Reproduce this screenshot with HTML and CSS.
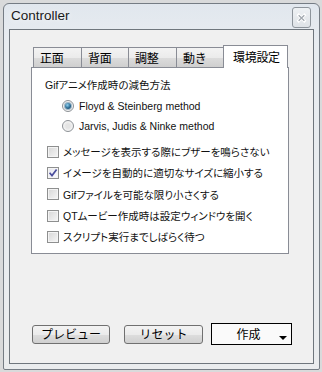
FILE: index.html
```html
<!DOCTYPE html>
<html lang="ja">
<head>
    <meta charset="UTF-8">
    <title>Controller</title>
    <link rel="stylesheet" href="styles.css">
</head>
<body>
    <div class="window">
        <div class="titlebar">
            <span class="title">Controller</span>
            <span class="close">
                <svg width="18" height="20" viewBox="0 0 18 20">
                    <path d="M6 7 L12 13 M12 7 L6 13" stroke="#ffffff" stroke-width="3.2" stroke-linecap="square"/>
                    <path d="M6 7 L12 13 M12 7 L6 13" stroke="#a3a9b0" stroke-width="1.4"/>
                </svg>
            </span>
        </div>
        <div class="client">
            <div class="tabs">
                <div class="tab" style="width: 49px">正面</div>
                <div class="tab" style="width: 48px">背面</div>
                <div class="tab" style="width: 49px">調整</div>
                <div class="tab" style="width: 48px">動き</div>
                <div class="tab selected">環境設定</div>
            </div>
            <div class="panel">
                <div class="group-label">Gifアニメ作成時の減色方法</div>
                <div class="radio-row"><span class="radio checked"></span>Floyd &amp; Steinberg method</div>
                <div class="radio-row"><span class="radio"></span>Jarvis, Judis &amp; Ninke method</div>
                <div class="checks">
                    <div class="check-row"><span class="check"></span>メッセージを表示する際にブザーを鳴らさない</div>
                    <div class="check-row"><span class="check checked">
                        <svg width="10" height="10" viewBox="0 0 10 10"><path d="M1.6 4.8 L4 7.6 L8.6 1.6" fill="none" stroke="#4a4d9c" stroke-width="1.7"/></svg>
                    </span>イメージを自動的に適切なサイズに縮小する</div>
                    <div class="check-row"><span class="check"></span>Gifファイルを可能な限り小さくする</div>
                    <div class="check-row"><span class="check"></span>QTムービー作成時は設定ウィンドウを開く</div>
                    <div class="check-row"><span class="check"></span>スクリプト実行までしばらく待つ</div>
                </div>
            </div>
            <div class="buttons">
                <button type="button" class="btn btn-preview">プレビュー</button>
                <button type="button" class="btn btn-reset">リセット</button>
                <button type="button" class="btn btn-menu">作成<span class="arrow"></span></button>
            </div>
        </div>
    </div>
</body>
</html>
```

FILE: styles.css
```css
body {
    margin: 0;
    width: 322px;
    height: 372px;
    overflow: hidden;
    background: #d9dadb;
    font-family: "Noto Sans CJK JP", sans-serif;
}

.window {
    box-sizing: border-box;
    width: 317px;
    height: 367px;
    margin: 3px 0 0 3px;
    padding: 0 5px 5px 5px;
    border: 1px solid #757c84;
    border-radius: 6px 6px 2px 2px;
    background: linear-gradient(180deg, #e1e7ee, #e8ecf0 40px, #eaecee);
}

.titlebar {
    height: 25px;
    display: flex;
    justify-content: space-between;
    align-items: flex-start;
}

.title {
    margin: 4px 0 0 2px;
    font-family: "Liberation Sans", sans-serif;
    font-size: 13.5px;
    color: #1a1a1a;
    text-shadow: 0 0 6px #ffffff;
}

.close {
    box-sizing: border-box;
    width: 19px;
    height: 21px;
    margin: 3px 3px 0 0;
    border: 1px solid #8e959c;
    border-radius: 3px;
    background: linear-gradient(180deg, #eef1f4, #dfe3e7);
    display: flex;
    align-items: center;
    justify-content: center;
}

.client {
    box-sizing: border-box;
    width: 305px;
    height: 335px;
    border: 1px solid #6f767d;
    background: #f0f0f0;
    padding: 15px 0 0 21px;
}

.tabs {
    display: flex;
    align-items: flex-end;
    height: 22px;
    margin-left: 2px;
}

.tab {
    box-sizing: border-box;
    height: 20px;
    margin-left: -1px;
    padding: 1px 0 0 6px;
    border: 1px solid #898c95;
    border-bottom: none;
    background: linear-gradient(180deg, #f3f3f3, #ebebeb 50%, #dcdcdc 51%, #cfcfcf);
    font-size: 12px;
    letter-spacing: -0.3px;
    line-height: 18px;
    color: #000;
}

.tab:first-child {
    margin-left: 0;
}

.tab.selected {
    position: relative;
    z-index: 1;
    width: 65px;
    height: 23px;
    margin-bottom: -1px;
    padding: 2px 0 0 9px;
    background: #ffffff;
}

.panel {
    box-sizing: border-box;
    width: 258px;
    height: 187px;
    border: 1px solid #898c95;
    background: #ffffff;
    padding: 10px 0 0 13px;
    font-family: "Liberation Sans", "Noto Sans CJK JP", sans-serif;
    font-size: 10.5px;
    font-feature-settings: "palt";
    color: #111;
}

.group-label {
    height: 15px;
    margin-bottom: 3px;
    line-height: 15px;
}

.radio-row {
    display: flex;
    align-items: center;
    height: 20px;
    padding-left: 17px;
}

.radio {
    box-sizing: border-box;
    width: 12px;
    height: 12px;
    margin-right: 5px;
    border: 1px solid #8d9196;
    border-radius: 50%;
    background: radial-gradient(circle at 50% 50%, #e4e4e4 30%, #f7f7f7 75%);
    display: flex;
    align-items: center;
    justify-content: center;
}

.radio.checked::after {
    content: "";
    width: 6px;
    height: 6px;
    border-radius: 50%;
    background: radial-gradient(circle at 40% 35%, #8fd0f0, #2a6a92 55%, #123c5c);
    box-shadow: 0 0 0 1px #9fb7c7;
}

.checks {
    margin-top: 5px;
}

.check-row {
    display: flex;
    align-items: center;
    height: 21.3px;
    padding-left: 2px;
}

.check {
    box-sizing: border-box;
    width: 12px;
    height: 12px;
    margin-right: 4px;
    border: 1px solid #8e8f8f;
    background: linear-gradient(135deg, #d6d6d6, #f6f6f6);
    box-shadow: inset 0 0 0 1px #f4f4f4;
    display: flex;
    align-items: center;
    justify-content: center;
}

.check.checked {
    background: linear-gradient(135deg, #e6e6ee, #fbfbfd);
}

.buttons {
    display: flex;
    align-items: center;
    margin-top: 69px;
    height: 22px;
}

.btn {
    box-sizing: border-box;
    height: 19px;
    padding: 0;
    border: 1px solid #707070;
    border-radius: 3px;
    background: linear-gradient(180deg, #f3f3f3, #ebebeb 50%, #dddddd 51%, #d0d0d0);
    font-family: "Noto Sans CJK JP", sans-serif;
    font-size: 12px;
    line-height: 16px;
    color: #000;
}

.btn-preview {
    width: 78px;
    margin-left: 1px;
}

.btn-reset {
    width: 79px;
    margin-left: 14px;
}

.btn-menu {
    position: relative;
    width: 81px;
    height: 22px;
    margin-left: 8px;
    border: 1px solid #000;
    border-radius: 0;
    background: #fafafa;
    padding-right: 6px;
}

.arrow {
    position: absolute;
    right: 4px;
    bottom: 4px;
    width: 0;
    height: 0;
    border-left: 4px solid transparent;
    border-right: 4px solid transparent;
    border-top: 4px solid #000;
}
```
